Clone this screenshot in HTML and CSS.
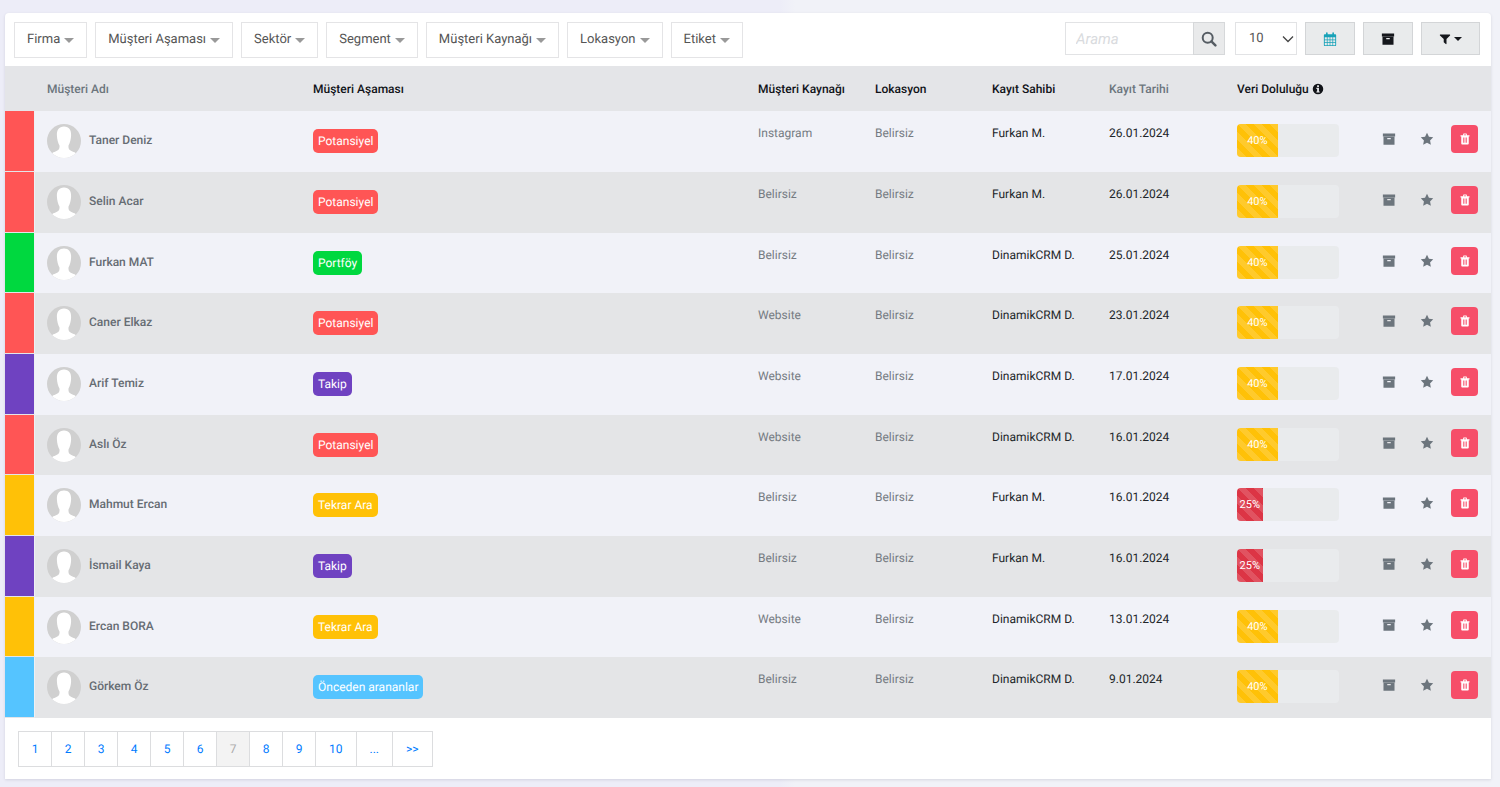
FILE: index.html
```html
<!DOCTYPE html>
<html lang="tr">
<head>
<meta charset="utf-8">
<title>Müşteriler</title>
<link rel="stylesheet" href="styles.css">
</head>
<body>
<svg class="sprite" aria-hidden="true">
  <symbol id="i-archive" viewBox="0 0 16 16"><path fill-rule="evenodd" d="M1 1.800h14v3.400H1zM1.700 5.500h12.600v9.100H1.700zM6 6.900v1.300h4V6.900z"/></symbol>
  <symbol id="i-star" viewBox="0 0 16 16"><path d="M8 .9l2.200 4.500 4.900.7-3.600 3.500.9 4.900L8 12.200l-4.400 2.300.9-4.900L.9 6.100l4.900-.7z"/></symbol>
  <symbol id="i-trash" viewBox="0 0 16 16"><path fill-rule="evenodd" d="M5.500 3V1.600Q5.500.8 6.300.8h3.400q.8 0 .8.800V3H14v1.500h-1V14q0 1.200-1.200 1.200H4.200Q3 15.200 3 14V4.500H2V3zM6.600 3h2.800V1.900H6.600zM5.300 6v7h1V6zm2.200 0v7h1V6zm2.200 0v7h1V6z"/></symbol>
  <symbol id="i-search" viewBox="0 0 16 16"><circle cx="6.700" cy="6.700" r="5" fill="none" stroke="currentColor" stroke-width="2"/><path d="M10.400 10.400l4 4" stroke="currentColor" stroke-width="2.400" stroke-linecap="round"/></symbol>
  <symbol id="i-calendar" viewBox="0 0 16 16"><path fill-rule="evenodd" d="M2 2.500h1.500V1q0-.8.900-.8t.9.800v1.500h5.400V1q0-.8.900-.8t.9.800v1.500H14q1 0 1 1V15q0 1-1 1H2q-1 0-1-1V3.500q0-1 1-1zM2 6v2.500h2.400V6zm3.200 0v2.500h2.400V6zm3.200 0v2.500h2.400V6zm3.200 0v2.500H14V6zM2 9.300v2.500h2.400V9.300zm3.200 0v2.500h2.400V9.300zm3.200 0v2.500h2.400V9.300zm3.200 0v2.500H14V9.300zM2 12.600V15h2.400v-2.400zm3.200 0V15h2.400v-2.400zm3.200 0V15h2.400v-2.400zm3.200 0V15H14v-2.400z"/></symbol>
  <symbol id="i-filter" viewBox="0 0 16 16"><path d="M1.500 2h13q.8.600.2 1.200L10 8v6.400q-.3.800-1 .3L6.300 12.300V8L1.300 3.200Q.7 2.600 1.500 2z"/></symbol>
  <symbol id="i-info" viewBox="0 0 16 16"><path fill-rule="evenodd" d="M8 1a7 7 0 1 1 0 14A7 7 0 0 1 8 1zM6.800 3v2.300h2.500V3zM5.800 6.400v1.500h1v3.400h-1v1.500h4.500v-1.500h-1V6.400z"/></symbol>
  <symbol id="i-user" viewBox="0 0 34 34"><circle cx="17" cy="17" r="17" fill="#d0d0d0"/><path fill="#fff" d="M17 2.500c5.200 0 7.300 3.800 7.100 8.700-.1 4.300-1.200 7.800-2.600 10.300-.3 3.600 1.100 5 4 5.900 1.600.5 2.900 1 3.200 1.800A17 17 0 0 1 17 34a17 17 0 0 1-11.700-4.800c.3-.8 1.600-1.300 3.200-1.800 2.900-.9 4.300-2.300 4-5.900-1.400-2.500-2.500-6-2.600-10.300C9.700 6.300 11.800 2.500 17 2.500z"/></symbol>
</svg>

<main class="card">
  <div class="toolbar">
    <div class="filters">
      <button class="filter" type="button">Firma<span class="caret"></span></button>
      <button class="filter" type="button">Müşteri Aşaması<span class="caret"></span></button>
      <button class="filter" type="button">Sektör<span class="caret"></span></button>
      <button class="filter" type="button">Segment<span class="caret"></span></button>
      <button class="filter" type="button">Müşteri Kaynağı<span class="caret"></span></button>
      <button class="filter" type="button">Lokasyon<span class="caret"></span></button>
      <button class="filter" type="button">Etiket<span class="caret"></span></button>
    </div>
    <div class="tools">
      <form class="search">
        <input class="search-input" type="search" placeholder="Arama" aria-label="Arama">
        <button class="search-button" type="button" aria-label="Ara"><svg class="icon-md"><use href="#i-search"/></svg></button>
      </form>
      <div class="page-size">
        <select class="page-size-select" aria-label="Sayfa başına kayıt"><option>10</option><option>25</option><option>50</option></select>
        <svg class="chevron" viewBox="0 0 12 8" aria-hidden="true"><path d="M1 1.500l5 5 5-5" fill="none" stroke="currentColor" stroke-width="1.300"/></svg>
      </div>
      <button class="tool tool-calendar" type="button" aria-label="Takvim"><svg class="icon-sm"><use href="#i-calendar"/></svg></button>
      <button class="tool" type="button" aria-label="Arşiv"><svg class="icon-sm"><use href="#i-archive"/></svg></button>
      <button class="tool tool-filter" type="button" aria-label="Filtrele"><svg class="icon-xs"><use href="#i-filter"/></svg><span class="caret caret-dark"></span></button>
    </div>
  </div>

  <table class="customers">
    <colgroup><col class="col-strip"><col class="col-name"><col><col class="col-meta"><col class="col-meta"><col class="col-meta"><col class="col-date"><col class="col-fill"><col class="col-actions"></colgroup>
    <thead>
      <tr><th></th><th class="muted">Müşteri Adı</th><th>Müşteri Aşaması</th><th>Müşteri Kaynağı</th><th>Lokasyon</th><th>Kayıt Sahibi</th><th class="muted">Kayıt Tarihi</th><th>Veri Doluluğu <svg class="icon-info"><use href="#i-info"/></svg></th><th></th></tr>
    </thead>
    <tbody>
      <tr>
        <td class="strip red"></td>
        <td><div class="person"><svg class="avatar"><use href="#i-user"/></svg><span>Taner Deniz</span></div></td>
        <td><span class="badge red">Potansiyel</span></td>
        <td class="meta">Instagram</td><td class="meta">Belirsiz</td><td>Furkan M.</td><td>26.01.2024</td>
        <td><div class="progress"><div class="bar" style="width:40%">40%</div></div></td>
        <td><div class="actions"><button class="action" type="button" aria-label="Arşivle"><svg class="icon-sm"><use href="#i-archive"/></svg></button><button class="action" type="button" aria-label="Favori"><svg class="icon-sm"><use href="#i-star"/></svg></button><button class="action delete" type="button" aria-label="Sil"><svg class="icon-xs"><use href="#i-trash"/></svg></button></div></td>
      </tr>
      <tr>
        <td class="strip red"></td>
        <td><div class="person"><svg class="avatar"><use href="#i-user"/></svg><span>Selin Acar</span></div></td>
        <td><span class="badge red">Potansiyel</span></td>
        <td class="meta">Belirsiz</td><td class="meta">Belirsiz</td><td>Furkan M.</td><td>26.01.2024</td>
        <td><div class="progress"><div class="bar" style="width:40%">40%</div></div></td>
        <td><div class="actions"><button class="action" type="button" aria-label="Arşivle"><svg class="icon-sm"><use href="#i-archive"/></svg></button><button class="action" type="button" aria-label="Favori"><svg class="icon-sm"><use href="#i-star"/></svg></button><button class="action delete" type="button" aria-label="Sil"><svg class="icon-xs"><use href="#i-trash"/></svg></button></div></td>
      </tr>
      <tr>
        <td class="strip green"></td>
        <td><div class="person"><svg class="avatar"><use href="#i-user"/></svg><span>Furkan MAT</span></div></td>
        <td><span class="badge green">Portföy</span></td>
        <td class="meta">Belirsiz</td><td class="meta">Belirsiz</td><td>DinamikCRM D.</td><td>25.01.2024</td>
        <td><div class="progress"><div class="bar" style="width:40%">40%</div></div></td>
        <td><div class="actions"><button class="action" type="button" aria-label="Arşivle"><svg class="icon-sm"><use href="#i-archive"/></svg></button><button class="action" type="button" aria-label="Favori"><svg class="icon-sm"><use href="#i-star"/></svg></button><button class="action delete" type="button" aria-label="Sil"><svg class="icon-xs"><use href="#i-trash"/></svg></button></div></td>
      </tr>
      <tr>
        <td class="strip red"></td>
        <td><div class="person"><svg class="avatar"><use href="#i-user"/></svg><span>Caner Elkaz</span></div></td>
        <td><span class="badge red">Potansiyel</span></td>
        <td class="meta">Website</td><td class="meta">Belirsiz</td><td>DinamikCRM D.</td><td>23.01.2024</td>
        <td><div class="progress"><div class="bar" style="width:40%">40%</div></div></td>
        <td><div class="actions"><button class="action" type="button" aria-label="Arşivle"><svg class="icon-sm"><use href="#i-archive"/></svg></button><button class="action" type="button" aria-label="Favori"><svg class="icon-sm"><use href="#i-star"/></svg></button><button class="action delete" type="button" aria-label="Sil"><svg class="icon-xs"><use href="#i-trash"/></svg></button></div></td>
      </tr>
      <tr>
        <td class="strip purple"></td>
        <td><div class="person"><svg class="avatar"><use href="#i-user"/></svg><span>Arif Temiz</span></div></td>
        <td><span class="badge purple">Takip</span></td>
        <td class="meta">Website</td><td class="meta">Belirsiz</td><td>DinamikCRM D.</td><td>17.01.2024</td>
        <td><div class="progress"><div class="bar" style="width:40%">40%</div></div></td>
        <td><div class="actions"><button class="action" type="button" aria-label="Arşivle"><svg class="icon-sm"><use href="#i-archive"/></svg></button><button class="action" type="button" aria-label="Favori"><svg class="icon-sm"><use href="#i-star"/></svg></button><button class="action delete" type="button" aria-label="Sil"><svg class="icon-xs"><use href="#i-trash"/></svg></button></div></td>
      </tr>
      <tr>
        <td class="strip red"></td>
        <td><div class="person"><svg class="avatar"><use href="#i-user"/></svg><span>Aslı Öz</span></div></td>
        <td><span class="badge red">Potansiyel</span></td>
        <td class="meta">Website</td><td class="meta">Belirsiz</td><td>DinamikCRM D.</td><td>16.01.2024</td>
        <td><div class="progress"><div class="bar" style="width:40%">40%</div></div></td>
        <td><div class="actions"><button class="action" type="button" aria-label="Arşivle"><svg class="icon-sm"><use href="#i-archive"/></svg></button><button class="action" type="button" aria-label="Favori"><svg class="icon-sm"><use href="#i-star"/></svg></button><button class="action delete" type="button" aria-label="Sil"><svg class="icon-xs"><use href="#i-trash"/></svg></button></div></td>
      </tr>
      <tr>
        <td class="strip yellow"></td>
        <td><div class="person"><svg class="avatar"><use href="#i-user"/></svg><span>Mahmut Ercan</span></div></td>
        <td><span class="badge yellow">Tekrar Ara</span></td>
        <td class="meta">Belirsiz</td><td class="meta">Belirsiz</td><td>Furkan M.</td><td>16.01.2024</td>
        <td><div class="progress"><div class="bar low" style="width:25%">25%</div></div></td>
        <td><div class="actions"><button class="action" type="button" aria-label="Arşivle"><svg class="icon-sm"><use href="#i-archive"/></svg></button><button class="action" type="button" aria-label="Favori"><svg class="icon-sm"><use href="#i-star"/></svg></button><button class="action delete" type="button" aria-label="Sil"><svg class="icon-xs"><use href="#i-trash"/></svg></button></div></td>
      </tr>
      <tr>
        <td class="strip purple"></td>
        <td><div class="person"><svg class="avatar"><use href="#i-user"/></svg><span>İsmail Kaya</span></div></td>
        <td><span class="badge purple">Takip</span></td>
        <td class="meta">Belirsiz</td><td class="meta">Belirsiz</td><td>Furkan M.</td><td>16.01.2024</td>
        <td><div class="progress"><div class="bar low" style="width:25%">25%</div></div></td>
        <td><div class="actions"><button class="action" type="button" aria-label="Arşivle"><svg class="icon-sm"><use href="#i-archive"/></svg></button><button class="action" type="button" aria-label="Favori"><svg class="icon-sm"><use href="#i-star"/></svg></button><button class="action delete" type="button" aria-label="Sil"><svg class="icon-xs"><use href="#i-trash"/></svg></button></div></td>
      </tr>
      <tr>
        <td class="strip yellow"></td>
        <td><div class="person"><svg class="avatar"><use href="#i-user"/></svg><span>Ercan BORA</span></div></td>
        <td><span class="badge yellow">Tekrar Ara</span></td>
        <td class="meta">Website</td><td class="meta">Belirsiz</td><td>DinamikCRM D.</td><td>13.01.2024</td>
        <td><div class="progress"><div class="bar" style="width:40%">40%</div></div></td>
        <td><div class="actions"><button class="action" type="button" aria-label="Arşivle"><svg class="icon-sm"><use href="#i-archive"/></svg></button><button class="action" type="button" aria-label="Favori"><svg class="icon-sm"><use href="#i-star"/></svg></button><button class="action delete" type="button" aria-label="Sil"><svg class="icon-xs"><use href="#i-trash"/></svg></button></div></td>
      </tr>
      <tr>
        <td class="strip blue"></td>
        <td><div class="person"><svg class="avatar"><use href="#i-user"/></svg><span>Görkem Öz</span></div></td>
        <td><span class="badge blue">Önceden arananlar</span></td>
        <td class="meta">Belirsiz</td><td class="meta">Belirsiz</td><td>DinamikCRM D.</td><td>9.01.2024</td>
        <td><div class="progress"><div class="bar" style="width:40%">40%</div></div></td>
        <td><div class="actions"><button class="action" type="button" aria-label="Arşivle"><svg class="icon-sm"><use href="#i-archive"/></svg></button><button class="action" type="button" aria-label="Favori"><svg class="icon-sm"><use href="#i-star"/></svg></button><button class="action delete" type="button" aria-label="Sil"><svg class="icon-xs"><use href="#i-trash"/></svg></button></div></td>
      </tr>
    </tbody>
  </table>

  <nav class="pagination" aria-label="Sayfalar">
    <a href="#1">1</a><a href="#2">2</a><a href="#3">3</a><a href="#4">4</a><a href="#5">5</a><a href="#6">6</a><a class="current" href="#7" aria-current="page">7</a><a href="#8">8</a><a href="#9">9</a><a class="wide" href="#10">10</a><a class="wide" href="#more">...</a><a class="wide" href="#next">&gt;&gt;</a>
  </nav>
</main>
</body>
</html>
```
FILE: styles.css
```css
* { box-sizing: border-box; }

body {
  margin: 0;
  padding: 13px 9px 7px 5px;
  background: linear-gradient(90deg, #ededf8 52%, #f1f2f8 53%);
  color: #212529;
  font: 12px/20px Roboto, "Liberation Sans", sans-serif;
  text-rendering: geometricPrecision;
}

button, input, select { font: inherit; color: inherit; text-rendering: inherit; }
button { padding: 0; cursor: pointer; }
svg { display: block; fill: currentColor; }
.sprite { display: none; }

.card {
  background: #fff;
  border-radius: 4px 4px 0 0;
  box-shadow: 0 1px 3px rgba(60, 60, 90, 0.15);
}

.toolbar {
  display: flex;
  justify-content: space-between;
  align-items: flex-start;
  padding: 9px 11px 8px 9px;
}

.filters { display: flex; gap: 8px; }

.filter {
  display: flex;
  align-items: center;
  gap: 4px;
  height: 36px;
  padding: 0 12px;
  border: 1px solid #e4e4e6;
  background: #fff;
  color: #555;
  font-size: 13px;
}

.caret {
  border: 5px solid transparent;
  border-top-color: #999;
  border-bottom: 0;
}

.caret-dark { border-width: 4px 4px 0; border-top-color: #15171c; }

.tools { display: flex; }
.search { display: flex; margin-right: 10px; }

.search-input {
  width: 128px;
  height: 33px;
  padding: 0 10px;
  border: 1px solid #e2e3e5;
  border-right: 0;
  border-radius: 0;
  background: #fff;
  font-size: 15px;
  appearance: none;
}

.search-input::placeholder { color: #d9dbde; font-style: italic; }

.search-button {
  display: grid;
  place-items: center;
  width: 32px;
  height: 33px;
  border: 1px solid #d6d8da;
  background: #e9eaeb;
  color: #555c63;
}

.page-size { display: grid; align-items: center; margin-right: 8px; }

.page-size-select {
  grid-area: 1 / 1;
  width: 62px;
  height: 33px;
  padding: 0 13px;
  border: 1px solid #e2e3e5;
  border-radius: 0;
  background: #fff;
  color: #555;
  font-size: 13px;
  appearance: none;
}

.chevron {
  grid-area: 1 / 1;
  justify-self: end;
  width: 12px;
  height: 8px;
  margin-right: 3px;
  color: #444;
  pointer-events: none;
}

.tool {
  display: flex;
  align-items: center;
  justify-content: center;
  width: 50px;
  height: 33px;
  margin-right: 8px;
  border: 1px solid #d3d5d7;
  background: #e9ebec;
  color: #15171c;
}

.tool-calendar { color: #17a2b8; }
.tool-filter { width: 59px; margin-right: 0; gap: 3px; }

.icon-xs { width: 12px; height: 12px; }
.icon-sm { width: 14px; height: 14px; }
.icon-md { width: 16px; height: 16px; }
.icon-info { display: inline-block; width: 12px; height: 12px; vertical-align: -2px; }

.customers {
  width: 100%;
  border-collapse: separate;
  border-spacing: 0;
  table-layout: fixed;
}

.col-strip { width: 30px; }
.col-name { width: 266px; }
.col-meta { width: 117px; }
.col-date { width: 128px; }
.col-fill { width: 126px; }
.col-actions { width: 140px; }

th {
  height: 45px;
  padding: 0 12px;
  background: #e4e5e8;
  color: #111318;
  font-weight: 500;
  text-align: left;
  white-space: nowrap;
}

.muted { color: #6c757d; }

td {
  height: 61px;
  padding: 13px 12px 0;
  line-height: 18px;
  vertical-align: top;
}

td:last-child { padding-right: 13px; }

tbody tr { background: #f1f2f8; }
tbody tr:nth-child(even) { background: #e4e5e7; }
tbody tr:nth-child(3n) td { height: 60px; }

.red { background: #ff5555; }
.green { background: #00d83f; }
.purple { background: #6f42c1; }
.yellow { background: #ffc107; }
.blue { background: #55c4ff; }

.strip {
  border-right: 1px solid #eef0f4;
  border-bottom: 1px solid #e4e5e8;
}

.meta { color: #757b82; }

.person {
  display: flex;
  gap: 8px;
  color: #666c73;
  font-weight: 500;
  line-height: 32px;
}

.avatar { width: 34px; height: 34px; }

.badge {
  display: inline-block;
  height: 24px;
  margin-top: 5px;
  padding: 0 5px;
  border-radius: 5px;
  color: #fff;
  line-height: 24px;
  white-space: nowrap;
}

.progress {
  display: flex;
  height: 33px;
  border-radius: 4px;
  overflow: hidden;
  background: #e9ebed;
}

.bar {
  background-color: #ffc107;
  background-image: linear-gradient(45deg, rgba(255,255,255,.15) 25%, transparent 25%, transparent 50%, rgba(255,255,255,.15) 50%, rgba(255,255,255,.15) 75%, transparent 75%);
  background-size: 16px 16px;
  color: #fff;
  font-size: 11px;
  line-height: 33px;
  text-align: center;
}

.bar.low { background-color: #dc3545; }

.actions { display: flex; justify-content: flex-end; gap: 11px; margin-top: 1px; }

.action {
  display: grid;
  place-items: center;
  width: 27px;
  height: 28px;
  border: 0;
  border-radius: 4px;
  background: transparent;
  color: #6c757d;
}

.delete { background: #f64e69; color: #fff; }

.pagination { display: flex; padding: 13px 13px 12px; }

.pagination a {
  min-width: 34px;
  height: 36px;
  margin-right: -1px;
  padding: 0 12px;
  border: 1px solid #dcdddf;
  color: #007bff;
  line-height: 34px;
  text-align: center;
  text-decoration: none;
}

.pagination .wide { padding: 0 13px; }
.pagination .current { background: #f3f3f3; color: #aaa; }
```
